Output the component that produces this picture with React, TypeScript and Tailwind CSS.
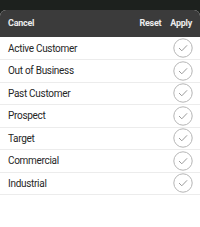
import React from 'react';

const ITEMS = ['Active Customer', 'Out of Business', 'Past Customer', 'Prospect', 'Target', 'Commercial', 'Industrial'];

const CheckCircle = () => (
  <svg width="20" height="20" viewBox="0 0 20 20" className="shrink-0">
    <circle cx="10" cy="10" r="9.2" fill="none" stroke="#b5b5b5" strokeWidth="1" />
    <path d="M6.3 10.3 L8.8 12.8 L13.8 7.6" fill="none" stroke="#9a9a9a" strokeWidth="1" strokeLinecap="round" strokeLinejoin="round" />
  </svg>
);

export default function App() {
  return (
    <div className="w-[200px] h-[227px] bg-[#1d211e] overflow-hidden" style={{ fontFamily: 'Roboto, "Liberation Sans", sans-serif' }}>
      <div className="mt-[10px] h-[217px] bg-white rounded-t-[6px] overflow-hidden flex flex-col">
        <div className="h-[27px] bg-[#3b3b3b] flex items-center justify-between pl-[8px] pr-[8px] text-[9px] font-bold tracking-[-0.25px] text-[#ececec] shrink-0">
          <span>Cancel</span>
          <div className="flex gap-[9px]">
            <span>Reset</span>
            <span>Apply</span>
          </div>
        </div>
        <div className="flex flex-col">
          {ITEMS.map((item, i) => (
            <div
              key={item}
              className={`${i === 0 ? 'h-[23px]' : 'h-[22.5px]'} flex items-center justify-between pl-[8px] pr-[7px] border-b border-[#ececec] text-[10px] tracking-[-0.3px] text-[#262626]`}
            >
              <span>{item}</span>
              <CheckCircle />
            </div>
          ))}
        </div>
      </div>
    </div>
  );
}
